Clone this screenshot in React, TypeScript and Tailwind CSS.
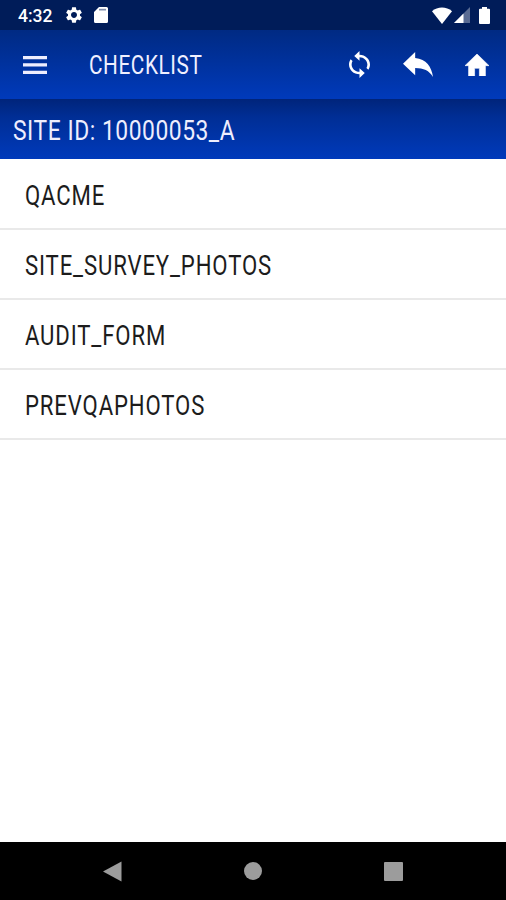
import { ReactNode } from "react";

const items = ["QACME", "SITE_SURVEY_PHOTOS", "AUDIT_FORM", "PREVQAPHOTOS"];

function Icon({ box, className, children }: { box: string; className: string; children: ReactNode }) {
  return (
    <svg viewBox={box} preserveAspectRatio="none" fill="currentColor" className={`shrink-0 ${className}`}>
      {children}
    </svg>
  );
}

function StatusBar() {
  return (
    <div className="flex h-[30px] items-center bg-[#001c59] pl-[18px] pr-4 text-white">
      <span className="w-[48px] whitespace-nowrap pt-[4px] text-[17.5px] font-medium leading-none">4:32</span>
      <Icon box="2.4 2 19.2 20" className="h-4 w-4">
        <path d="M19.14 12.94c.04-.3.06-.61.06-.94 0-.32-.02-.64-.07-.94l2.03-1.58c.18-.14.23-.41.12-.61l-1.92-3.32c-.12-.22-.37-.29-.59-.22l-2.39.96c-.5-.38-1.03-.7-1.62-.94l-.36-2.54c-.04-.24-.24-.41-.48-.41h-3.84c-.24 0-.43.17-.47.41l-.36 2.54c-.59.24-1.13.57-1.62.94l-2.39-.96c-.22-.08-.47 0-.59.22L2.74 8.87c-.12.21-.08.47.12.61l2.03 1.58c-.05.3-.09.63-.09.94s.02.64.07.94l-2.03 1.58c-.18.14-.23.41-.12.61l1.92 3.32c.12.22.37.29.59.22l2.39-.96c.5.38 1.03.7 1.62.94l.36 2.54c.05.24.24.41.48.41h3.84c.24 0 .44-.17.47-.41l.36-2.54c.59-.24 1.13-.56 1.62-.94l2.39.96c.22.08.47 0 .59-.22l1.92-3.32c.12-.22.07-.47-.12-.61l-2.01-1.58zM12 15.6c-1.98 0-3.6-1.62-3.6-3.6s1.62-3.6 3.6-3.6 3.6 1.62 3.6 3.6-1.62 3.6-3.6 3.6z" />
      </Icon>
      <Icon box="0 0 14 16" className="ml-3 h-4 w-3.5">
        <path d="M5 0h7.5A1.5 1.5 0 0 1 14 1.5v13a1.5 1.5 0 0 1-1.5 1.5h-11A1.5 1.5 0 0 1 0 14.5V5z" />
        <path d="M5 1.8h7v1.7H5z" fill="#001c59" opacity="0.5" />
      </Icon>
      <div className="ml-auto flex items-center">
        <Icon box="0 0 20 17" className="h-[17px] w-5">
          <path d="M10 17 0 4.2C5.5-.8 14.5-.8 20 4.2z" />
        </Icon>
        <Icon box="0 0 16 16" className="ml-[2px] h-4 w-4">
          <path d="M16 0v16H0z" opacity="0.35" />
          <path d="M9.5 6.5V16H0z" />
        </Icon>
        <Icon box="0 0 11 17" className="ml-[9px] h-[17px] w-[11px]">
          <path d="M3 0h5v1.7h2q1 0 1 1V16q0 1-1 1H1q-1 0-1-1V2.7q0-1 1-1h2z" />
        </Icon>
      </div>
    </div>
  );
}

function Toolbar() {
  return (
    <header className="flex h-[69px] items-center bg-linear-to-b from-[#002a83] to-[#003abb] pl-[23px] pr-[17px] text-white">
      <button className="text-[#eeeefe]" aria-label="Menu">
        <Icon box="0 0 24 18" className="block h-[18px] w-6">
          <path d="M0 0h24v3.3H0zM0 7.3h24v3.3H0zM0 14.7h24V18H0z" />
        </Icon>
      </button>
      <h1 className="ml-[42px] w-[114px] pt-[2px] text-[25px] leading-none text-[#f0f0ff]">
        <span className="inline-block origin-left scale-x-[0.83] whitespace-nowrap tracking-[0.7px]">CHECKLIST</span>
      </h1>
      <div className="ml-auto flex items-center">
        <Icon box="4 1 16 22" className="h-[27px] w-[21px]">
          <path d="M12 4V1L8 5l4 4V6c3.31 0 6 2.69 6 6 0 1.01-.25 1.97-.7 2.8l1.46 1.46C19.54 15.03 20 13.57 20 12c0-4.42-3.58-8-8-8zm0 14c-3.31 0-6-2.69-6-6 0-1.01.25-1.97.7-2.8L5.24 7.74C4.46 8.97 4 10.43 4 12c0 4.42 3.58 8 8 8v3l4-4-4-4v3z" />
        </Icon>
        <Icon box="3 5 18 15" className="ml-[33px] h-[25px] w-[30px]">
          <path d="M10.3 8.6V5L3 12l7.3 7v-4.4c5 0 8.5 1.6 10.7 5.4-.8-6-4-10.9-10.7-11.4z" />
        </Icon>
        <Icon box="2 3 20 17" className="ml-8 h-[22px] w-6">
          <path d="M10 20v-6h4v6h5v-8h3L12 3 2 12h3v8z" stroke="currentColor" strokeWidth="0.5" />
        </Icon>
      </div>
    </header>
  );
}

function NavBar() {
  return (
    <nav className="flex h-[58px] items-center bg-black text-[#9c9c9c]">
      <Icon box="0 0 19 21" className="ml-[103px] h-[21px] w-[19px]">
        <path d="M18.5.5v20L0 10.5z" />
      </Icon>
      <span className="ml-[122px] h-[18px] w-[18px] rounded-full bg-[#9c9c9c]" />
      <span className="ml-[122px] h-[19px] w-[19px] rounded-[1px] bg-[#9c9c9c]" />
    </nav>
  );
}

export default function App() {
  return (
    <div className="flex h-[900px] w-[506px] flex-col overflow-hidden bg-white font-['Roboto',sans-serif]">
      <StatusBar />
      <Toolbar />
      <div className="flex h-[60px] items-center bg-linear-to-b from-[#00247a] via-[#002e95] via-30% to-[#003abb] pl-[13px] pt-[4px] text-[27.5px] leading-none text-[#eeeefe]">
        <span className="inline-block origin-left scale-x-[0.83] whitespace-nowrap tracking-[0.65px]">SITE ID: 10000053_A</span>
      </div>
      <ul className="flex-1 pt-px">
        {items.map((item) => (
          <li key={item} className="flex h-[70px] items-center border-b-2 border-[#e9e9e9] pl-[25px] pt-[4px] text-[27px] leading-none text-[#1c1c1c]">
            <span className="inline-block origin-left scale-x-[0.82] whitespace-nowrap tracking-[1.05px]">{item}</span>
          </li>
        ))}
      </ul>
      <NavBar />
    </div>
  );
}
